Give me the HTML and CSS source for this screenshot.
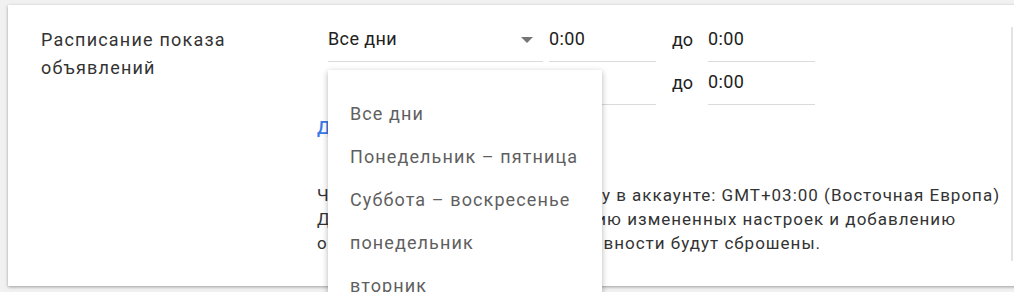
FILE: index.html
```html
<!DOCTYPE html>
<html lang="ru">
<head>
<meta charset="UTF-8" />
<title>Расписание показа объявлений</title>
<link rel="stylesheet" href="styles.css">
</head>
<body>
  <div class="card">
    <div class="setting">
      <div class="setting-label">Расписание показа<br>объявлений</div>
      <div class="setting-body">
        <div class="schedule-row">
          <div class="field select-field">
            <span>Все дни</span>
            <span class="caret"></span>
          </div>
          <div class="field time-field">0:00</div>
          <span class="to">до</span>
          <div class="field time-field">0:00</div>
        </div>
        <div class="schedule-row">
          <div class="field select-field">
            <span>Все дни</span>
            <span class="caret"></span>
          </div>
          <div class="field time-field">0:00</div>
          <span class="to">до</span>
          <div class="field time-field">0:00</div>
        </div>
        <a class="add-link" href="#">Добавить</a>
        <p class="note">
          Часы соответствуют указанному в аккаунте: GMT+03:00 (Восточная Европа)<br>
          Данные, относящиеся к удалению измененных настроек и добавлению<br>
          объявлений и итоги по эффективности будут сброшены.
        </p>

        <ul class="menu" role="listbox">
          <li>Все дни</li>
          <li>Понедельник – пятница</li>
          <li>Суббота – воскресенье</li>
          <li>понедельник</li>
          <li>вторник</li>
          <li>среда</li>
        </ul>
      </div>
    </div>
  </div>
</body>
</html>
```

FILE: styles.css
```css
html, body {
  margin: 0;
  padding: 0;
  height: 100%;
  overflow: hidden;
  background: #f1f1f1;
  font-family: Roboto, 'Noto Sans', sans-serif;
  color: #212121;
}
.card {
  margin: 5px 0 0 8px;
  width: 1040px;
  height: 281px;
  background: #fff;
  box-shadow: 0 1px 3px rgba(0,0,0,0.35);
  padding: 14px 0 0 33px;
  box-sizing: border-box;
}
.setting {
  display: flex;
  width: 970px;
  min-height: 234px;
  border-right: 2px solid #e4e4e4;
  margin-top: 8px;
}
.setting-label {
  width: 287px;
  flex: none;
  font-size: 18px;
  letter-spacing: 1.2px;
  line-height: 28px;
  color: #333;
  margin-top: -1px;
}
.setting-body {
  position: relative;
  flex: 1;
  margin-top: -8px;
}
.schedule-row {
  display: flex;
  align-items: flex-start;
}
.field {
  height: 43px;
  padding-top: 8px;
  box-sizing: border-box;
  border-bottom: 1px solid #dadada;
  font-size: 18px;
  letter-spacing: 0.4px;
  line-height: 24px;
}
.select-field {
  width: 215px;
  display: flex;
  justify-content: space-between;
  margin-right: 6px;
}
.caret {
  width: 0;
  height: 0;
  margin: 10px 10px 0 0;
  border-left: 6px solid transparent;
  border-right: 6px solid transparent;
  border-top: 6px solid #757575;
}
.time-field {
  width: 107px;
}
.to {
  width: 36px;
  padding: 9px 0 0 16px;
  font-size: 18px;
  line-height: 24px;
}
.add-link {
  display: inline-block;
  margin: 11px 0 0 -11px;
  font-size: 18px;
  line-height: 24px;
  color: #3b78e7;
  text-decoration: none;
  font-weight: 500;
}
.note {
  margin: 43px 0 0 -11px;
  font-size: 17px;
  letter-spacing: 1px;
  line-height: 24px;
  color: #333;
  white-space: nowrap;
}
.menu {
  position: absolute;
  top: 51px;
  left: 0;
  width: 274px;
  margin: 0;
  padding: 22px 0 0;
  list-style: none;
  background: #fff;
  box-shadow: 0 2px 6px rgba(0,0,0,0.3);
}
.menu li {
  height: 43px;
  line-height: 43px;
  padding-left: 22px;
  font-size: 18px;
  letter-spacing: 1.1px;
  color: #5f5f5f;
}
```
